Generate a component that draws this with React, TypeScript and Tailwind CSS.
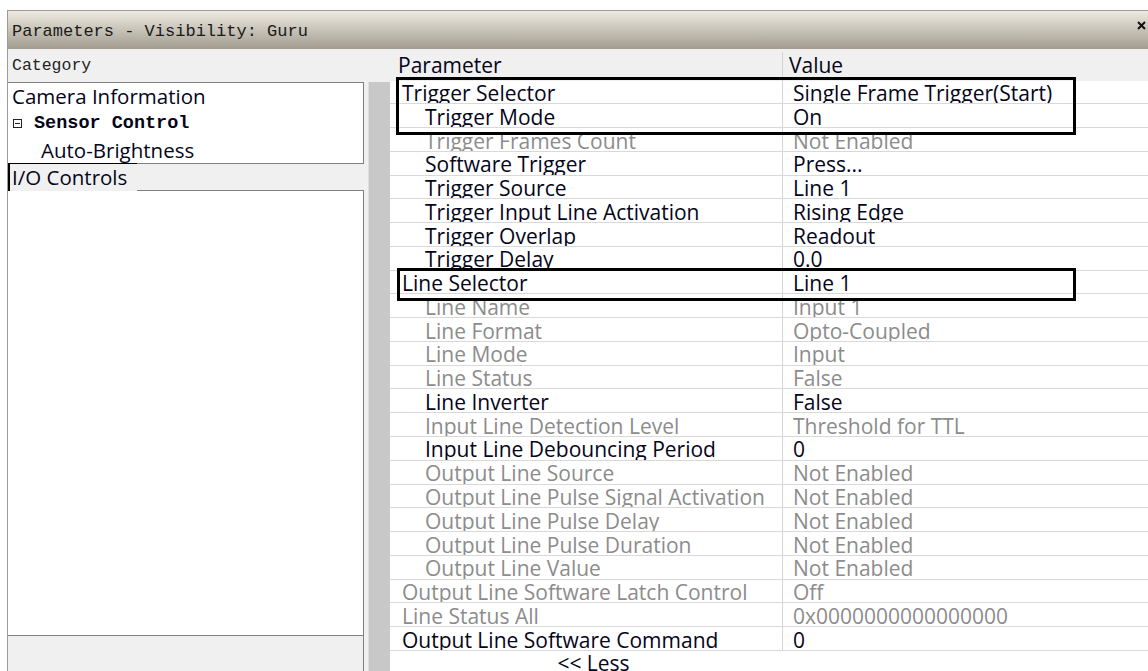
import React from 'react';

type Param = {
  name: string;
  value: string;
  child?: boolean;
  dim?: boolean;
};

const params: Param[] = [
  { name: 'Trigger Selector', value: 'Single Frame Trigger(Start)' },
  { name: 'Trigger Mode', value: 'On', child: true },
  { name: 'Trigger Frames Count', value: 'Not Enabled', child: true, dim: true },
  { name: 'Software Trigger', value: 'Press...', child: true },
  { name: 'Trigger Source', value: 'Line 1', child: true },
  { name: 'Trigger Input Line Activation', value: 'Rising Edge', child: true },
  { name: 'Trigger Overlap', value: 'Readout', child: true },
  { name: 'Trigger Delay', value: '0.0', child: true },
  { name: 'Line Selector', value: 'Line 1' },
  { name: 'Line Name', value: 'Input 1', child: true, dim: true },
  { name: 'Line Format', value: 'Opto-Coupled', child: true, dim: true },
  { name: 'Line Mode', value: 'Input', child: true, dim: true },
  { name: 'Line Status', value: 'False', child: true, dim: true },
  { name: 'Line Inverter', value: 'False', child: true },
  { name: 'Input Line Detection Level', value: 'Threshold for TTL', child: true, dim: true },
  { name: 'Input Line Debouncing Period', value: '0', child: true },
  { name: 'Output Line Source', value: 'Not Enabled', child: true, dim: true },
  { name: 'Output Line Pulse Signal Activation', value: 'Not Enabled', child: true, dim: true },
  { name: 'Output Line Pulse Delay', value: 'Not Enabled', child: true, dim: true },
  { name: 'Output Line Pulse Duration', value: 'Not Enabled', child: true, dim: true },
  { name: 'Output Line Value', value: 'Not Enabled', child: true, dim: true },
  { name: 'Output Line Software Latch Control', value: 'Off', dim: true },
  { name: 'Line Status All', value: '0x0000000000000000', dim: true },
  { name: 'Output Line Software Command', value: '0' },
];

const ParamRow: React.FC<{ p: Param }> = ({ p }) => {
  const color = p.dim ? 'text-[#8c8c8c]' : 'text-[#05051a]';
  return (
    <div className={`flex h-[23.78px] shrink-0 overflow-hidden border-b border-[#d9d9d9] leading-[23.78px] ${color}`}>
      <div className={`w-[393px] shrink-0 whitespace-nowrap border-r border-[#d4d4d4] pt-[1.5px] ${p.child ? 'pl-[35px]' : 'pl-[12px]'}`}>
        {p.name}
      </div>
      <div className="flex-1 whitespace-nowrap pl-[10px] pt-[1.5px]">{p.value}</div>
    </div>
  );
};

export default function App() {
  return (
    <div className="relative flex h-[671px] w-[1148px] flex-col overflow-hidden bg-white pl-[7px] pt-[10px]">
      {/* window frame */}
      <div className="flex min-h-0 flex-1 flex-col border-l border-t border-[#9a9a9a] bg-[#f0f0f0]">
        {/* title bar */}
        <div className="relative flex h-[38px] shrink-0 items-center bg-gradient-to-b from-[#eeeae0] to-[#a29d90] pl-[4px] pt-[3px] font-['Liberation_Mono',monospace] text-[17px] text-[#1a1a1a]">
          Parameters - Visibility: Guru
          <svg className="absolute right-[2px] top-[10px]" width="9" height="9" viewBox="0 0 9 9">
            <path d="M1 1 L8 8 M8 1 L1 8" stroke="#111" strokeWidth="2" />
          </svg>
        </div>

        <div className="flex min-h-0 flex-1 overflow-hidden">
          {/* category tree */}
          <div className="flex w-[356px] shrink-0 flex-col">
            <div className="flex h-[33px] shrink-0 items-center pl-[4px] pt-[2px] font-['Liberation_Mono',monospace] text-[16.5px] text-[#222]">
              Category
            </div>
            <div className="flex flex-col border-r border-t border-[#808080] bg-white font-['Open_Sans',sans-serif] text-[20.5px] text-[#05051a]">
              <div className="flex h-[27px] items-center pl-[4px]">Camera Information</div>
              <div className="flex h-[27px] items-center pl-[5px]">
                <span className="mr-[12px] flex h-[9px] w-[9px] items-center justify-center border border-[#222]">
                  <span className="h-px w-[5px] bg-[#222]" />
                </span>
                <span className="font-['Liberation_Mono',monospace] text-[18.5px] font-bold">Sensor Control</span>
              </div>
              <div className="flex h-[26px] items-center pl-[33px]">Auto-Brightness</div>
            </div>
            <div className="flex h-[28px] shrink-0 font-['Open_Sans',sans-serif] text-[20.5px] text-[#05051a]">
              <div className="flex w-[129px] items-center border-l-2 border-t border-black pl-[2px]">I/O Controls</div>
              <div className="flex-1 border-b border-t border-[#808080]" />
            </div>
            <div className="flex-1 border-b border-r border-[#808080] bg-white" />
            <div className="h-[35px] shrink-0 border-r border-[#808080]" />
          </div>

          {/* splitter strip */}
          <div className="flex w-[26px] shrink-0 flex-col">
            <div className="h-[33px] shrink-0" />
            <div className="ml-[4px] flex flex-1">
              <div className="w-px bg-[#dedede]" />
              <div className="flex-1 bg-[#c8c8c8]" />
            </div>
          </div>

          {/* parameter grid */}
          <div className="flex flex-1 flex-col bg-white font-['Open_Sans',sans-serif] text-[21px]">
            <div className="flex h-[31.5px] shrink-0 bg-[#f0f0f0] text-[#05051a]">
              <div className="w-[392px] shrink-0 pl-[8px] pt-[2px] leading-[28px]">Parameter</div>
              <div className="mt-[3px] flex-1 border-l border-[#d4d4d4] pl-[6px] leading-[26px]">Value</div>
            </div>
            {params.map((p) => (
              <ParamRow key={p.name} p={p} />
            ))}
            <div className="h-[23.78px] w-[393px] shrink-0 pl-[14px] pt-[1.5px] text-center leading-[23.78px] text-[#05051a]">
              &lt;&lt; Less
            </div>
          </div>
        </div>
      </div>

      {/* highlight frames */}
      <div className="pointer-events-none absolute left-[396px] top-[77px] h-[58px] w-[680px] border-[3.5px] border-black" />
      <div className="pointer-events-none absolute left-[397px] top-[268px] h-[33px] w-[679px] border-[3.5px] border-black" />
    </div>
  );
}
